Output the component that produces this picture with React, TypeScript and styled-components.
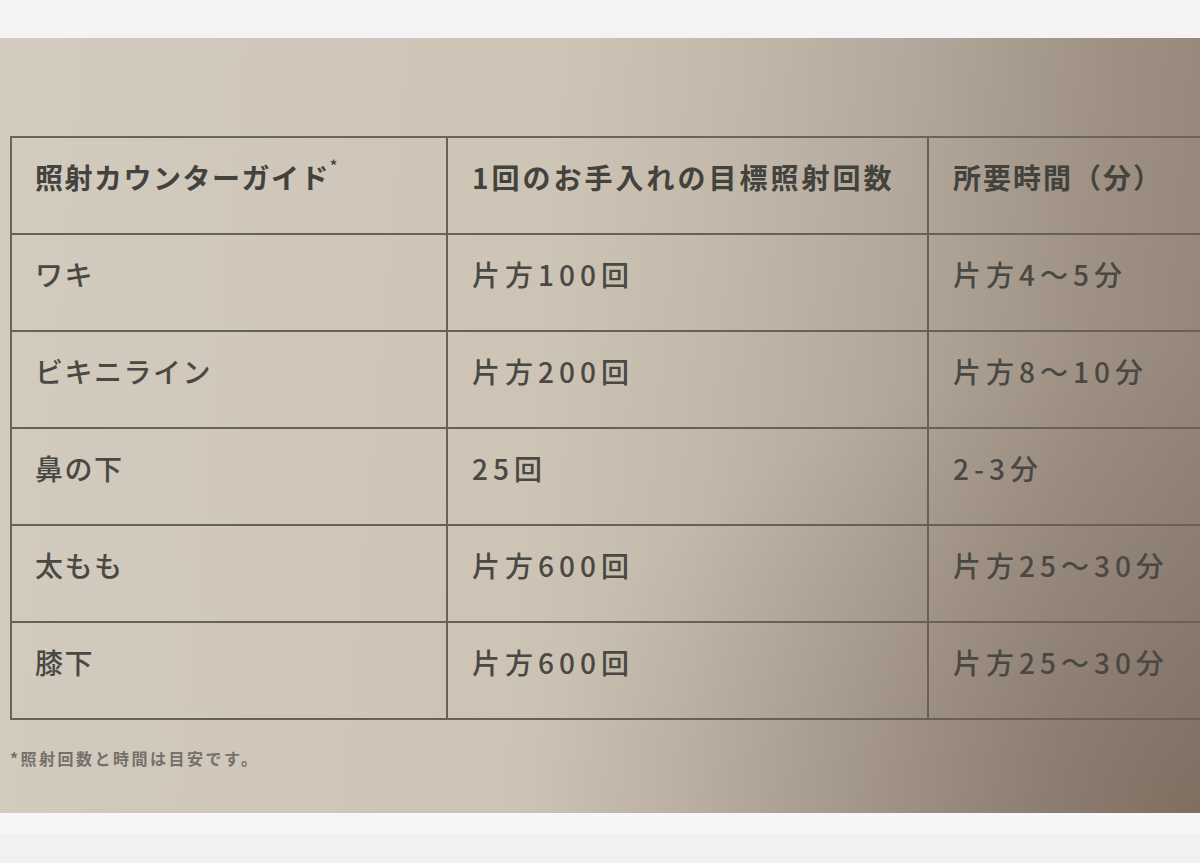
import React from "react";
import styled, { createGlobalStyle } from "styled-components";

const GlobalStyle = createGlobalStyle`
  html, body {
    margin: 0;
    padding: 0;
    background: #f3f2f2;
  }
  * {
    box-sizing: border-box;
  }
`;

const Page = styled.div`
  width: 1200px;
  height: 863px;
  display: flex;
  flex-direction: column;
  overflow: hidden;
  font-family: "Noto Sans CJK JP", "Noto Sans", sans-serif;
`;

const TopBand = styled.div`
  height: 38px;
  flex: none;
  background: #f4f2f2;
`;

const Paper = styled.div`
  height: 775px;
  flex: none;
  padding: 98px 0 0 10px;
  overflow: hidden;
  background:
    radial-gradient(ellipse 55% 60% at 100% 100%, rgba(80, 60, 45, 0.3), rgba(80, 60, 45, 0) 100%),
    linear-gradient(95deg, #d3cbbe 0%, #cdc4b6 45%, #c3b9ab 58%, #b3a89b 72%, #9e9184 88%, #928578 100%);
`;

const BottomBand = styled.div`
  flex: 1;
  background: linear-gradient(to bottom, #f8f6f6 0%, #f7f5f5 40%, #f1f1f1 45%, #f1f1f1 100%);
`;

const Table = styled.div`
  display: grid;
  grid-template-columns: 436px 481px 1fr;
  grid-auto-rows: 97px;
  border-top: 2px solid #6a645b;
  border-left: 2px solid #6a645b;
`;

const Cell = styled.div<{ $head?: boolean; $last?: boolean; $shift: number; $spread: number }>`
  padding: 20px 0 0 ${(p) => p.$shift}px;
  border-bottom: 2px solid #67615a;
  border-right: ${(p) => (p.$last ? "none" : "2px solid #67615a")};
  font-size: 28px;
  line-height: 1.4;
  font-weight: ${(p) => (p.$head ? 700 : 500)};
  color: ${(p) => (p.$head ? "#43423d" : "#4a4843")};
  letter-spacing: ${(p) => p.$spread}px;
  white-space: nowrap;
`;

const Mark = styled.sup`
  font-size: 14px;
  vertical-align: top;
  position: relative;
  top: -2px;
`;

const Footnote = styled.div`
  margin-top: 26px;
  font-size: 16px;
  font-weight: 700;
  letter-spacing: 2.5px;
  color: #75706a;
`;

const rows: [string, string, string][] = [
  ["ワキ", "片方100回", "片方4〜5分"],
  ["ビキニライン", "片方200回", "片方8〜10分"],
  ["鼻の下", "25回", "2-3分"],
  ["太もも", "片方600回", "片方25〜30分"],
  ["膝下", "片方600回", "片方25〜30分"],
];

const shifts = [23, 24, 24];
const headSpread = [1.5, 3, 2];
const bodySpread = [1.5, 5, 5];

export default function App() {
  return (
    <Page>
      <GlobalStyle />
      <TopBand />
      <Paper>
        <Table>
          <Cell $head $shift={shifts[0]} $spread={headSpread[0]}>
            照射カウンターガイド<Mark>*</Mark>
          </Cell>
          <Cell $head $shift={shifts[1]} $spread={headSpread[1]}>
            1回のお手入れの目標照射回数
          </Cell>
          <Cell $head $last $shift={shifts[2]} $spread={headSpread[2]}>
            所要時間（分）
          </Cell>
          {rows.map((r) => (
            <React.Fragment key={r[0]}>
              <Cell $shift={shifts[0]} $spread={bodySpread[0]}>
                {r[0]}
              </Cell>
              <Cell $shift={shifts[1]} $spread={bodySpread[1]}>
                {r[1]}
              </Cell>
              <Cell $last $shift={shifts[2]} $spread={bodySpread[2]}>
                {r[2]}
              </Cell>
            </React.Fragment>
          ))}
        </Table>
        <Footnote>*照射回数と時間は目安です。</Footnote>
      </Paper>
      <BottomBand />
    </Page>
  );
}
